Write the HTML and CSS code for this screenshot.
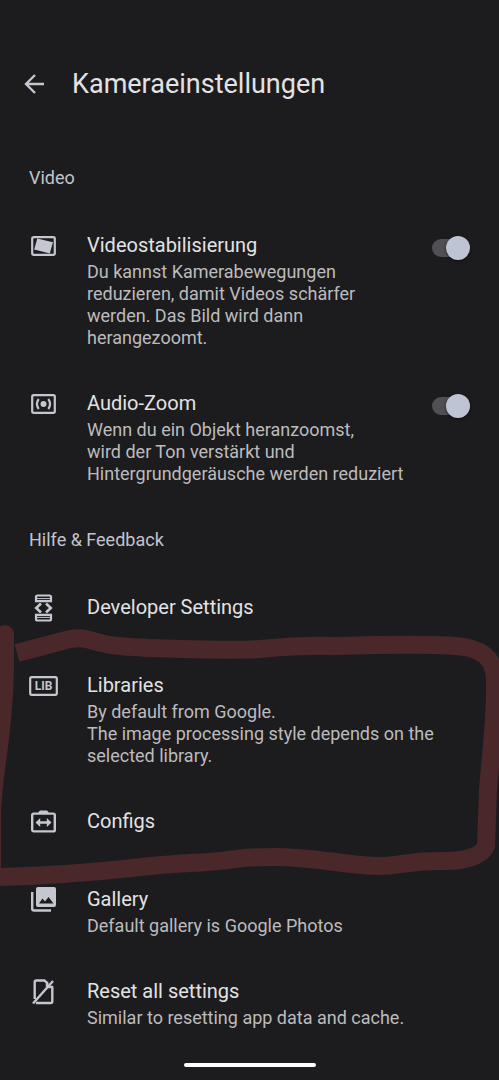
FILE: index.html
```html
<!DOCTYPE html>
<html lang="de">
<head>
<meta charset="utf-8">
<meta name="viewport" content="width=device-width, initial-scale=1">
<title>Kameraeinstellungen</title>
<link rel="stylesheet" href="styles.css">
</head>
<body>
<div class="screen">
  <header class="topbar">
    <button class="back" type="button" aria-label="Zurück">
      <svg width="20" height="20" viewBox="0 0 20 20" fill="none" stroke="currentColor" stroke-width="2.4"><path d="M20 10H2M11 1L2 10l9 9"/></svg>
    </button>
    <h1 class="title">Kameraeinstellungen</h1>
  </header>
  <main class="content">
    <section>
      <h2 class="section-label">Video</h2>
      <div class="row">
        <svg class="icon" viewBox="0 1 30 28"><rect x="3.2" y="6.2" width="22.6" height="17.6" rx="1.5" fill="none" stroke="currentColor" stroke-width="2.2"/><path d="M8.3 7.5L24 11.3 20.8 22.6 5.2 18.6z" fill="currentColor"/></svg>
        <div class="text">
          <label class="name" for="stab">Videostabilisierung</label>
          <p class="desc">Du kannst Kamerabewegungen<br>reduzieren, damit Videos schärfer<br>werden. Das Bild wird dann<br>herangezoomt.</p>
        </div>
        <input class="switch" type="checkbox" role="switch" id="stab" checked>
      </div>
      <div class="row">
        <svg class="icon" viewBox="0 1 30 28" fill="none" stroke="currentColor" stroke-width="2.2"><rect x="3.2" y="6.2" width="22.6" height="17.6" rx="1.5"/><circle cx="14.5" cy="15" r="3" fill="currentColor" stroke="none"/><path d="M9.7 10q-3.500 5 0 10M19.300 10q3.500 5 0 10"/></svg>
        <div class="text">
          <label class="name" for="zoom">Audio-Zoom</label>
          <p class="desc">Wenn du ein Objekt heranzoomst,<br>wird der Ton verstärkt und<br>Hintergrundgeräusche werden reduziert</p>
        </div>
        <input class="switch" type="checkbox" role="switch" id="zoom" checked>
      </div>
    </section>
    <section class="help">
      <h2 class="section-label">Hilfe &amp; Feedback</h2>
      <div class="row">
        <svg class="icon" viewBox="0 1 30 28" fill="none" stroke="currentColor" stroke-width="2.2"><path d="M7 8.200V4q0-1.500 1.500-1.500h12Q22 2.500 22 4v4.200zM7 21.800V26q0 1.500 1.500 1.500h12q1.500 0 1.500-1.500v-4.200z"/><path stroke-width="1" d="M8 5.600h13M8 24.400h13"/><path stroke-width="2.600" d="M12 10.500L7.200 15l4.800 4.500M17 10.500L21.800 15 17 19.500"/></svg>
        <div class="text"><h3 class="name">Developer Settings</h3></div>
      </div>
      <div class="row">
        <svg class="icon" viewBox="0 1 30 28"><rect x="1.200" y="6.200" width="26.600" height="17.600" rx="1.500" fill="none" stroke="currentColor" stroke-width="2.200"/><text class="lib" x="14.500" y="19" text-anchor="middle">LIB</text></svg>
        <div class="text">
          <h3 class="name">Libraries</h3>
          <p class="desc">By default from Google.<br>The image processing style depends on the<br>selected library.</p>
        </div>
      </div>
      <div class="row">
        <svg class="icon" viewBox="0 1 30 28"><path d="M9.500 6V5l1.500-1.500h7L19.500 5v1z" fill="currentColor"/><rect x="3.200" y="6.600" width="22.600" height="17.800" rx="1.500" fill="none" stroke="currentColor" stroke-width="2.400"/><path d="M6.500 15.500L11.200 11v3.300h6.600V11l4.700 4.500-4.700 4.500v-3.300h-6.600V20z" fill="currentColor"/></svg>
        <div class="text"><h3 class="name">Configs</h3></div>
      </div>
      <div class="row">
        <svg class="icon" viewBox="0 1 30 28"><path d="M3.200 7v16.500q0 2 2 2H22" fill="none" stroke="currentColor" stroke-width="2.400"/><path fill-rule="evenodd" fill="currentColor" d="M9 2h16q2 0 2 2v16q0 2-2 2H9q-2 0-2-2V4q0-2 2-2zM10 18.500h14.500l-5-6.500-3.500 4.500-2.500-3z"/></svg>
        <div class="text">
          <h3 class="name">Gallery</h3>
          <p class="desc">Default gallery is Google Photos</p>
        </div>
      </div>
      <div class="row">
        <svg class="icon" viewBox="0 1 30 28" fill="none" stroke="currentColor" stroke-width="2.400"><path d="M5.700 22V5q0-1.500 1.500-1.500H15.500L19 7M23.300 9.500V24.500q0 1.500-1.500 1.500H7M18 4.500V10h6M4 26.500L24 4"/></svg>
        <div class="text">
          <h3 class="name">Reset all settings</h3>
          <p class="desc">Similar to resetting app data and cache.</p>
        </div>
      </div>
      <svg class="marker" viewBox="0 0 499 290" preserveAspectRatio="none" aria-hidden="true">
        <path d="M17 43L70 29Q80 27 90 30C110 36 115 36 150 38C190 39 230 41 260 39C290 36 310 35 335 36C370 35 430 34 455 36Q495 38 495 70C496 110 490 150 488 180L486 236C482 246 465 251 445 251C410 250 400 256 380 256C350 256 310 246 270 247C230 247 240 251 190 253C130 256 110 264 0 267"/>
        <path stroke-linecap="round" d="M5 24V60C3 140-8 160-8 210V267H0"/>
      </svg>
    </section>
  </main>
  <footer class="navbar"><span class="handle"></span></footer>
</div>
</body>
</html>
```
FILE: styles.css
```css
* {
  box-sizing: border-box;
}

body {
  margin: 0;
  background: #1c1c1e;
  color: #e3e2e4;
  font-family: Roboto, "Liberation Sans", sans-serif;
}

h1, h2, h3, p {
  margin: 0;
  font-weight: 400;
}

.screen {
  display: flex;
  flex-direction: column;
  min-height: 100vh;
  overflow-x: hidden;
}

.topbar {
  display: flex;
  align-items: center;
  gap: 28px;
  height: 144px;
  padding: 24px 24px 0;
}

.back {
  display: flex;
  padding: 0;
  border: 0;
  background: none;
  color: #c4c6d0;
}

.title {
  font-size: 27px;
  line-height: 36px;
}

.content {
  flex: 1;
}

.section-label {
  padding: 0 29px;
  color: #c0c4cf;
  font-size: 18px;
  line-height: 68px;
}

.row {
  display: flex;
  gap: 28px;
  min-height: 78px;
  padding: 20px 29px 21px;
}

.icon {
  flex: none;
  width: 30px;
  height: 28px;
  color: #c4c6d0;
}

.lib {
  fill: currentColor;
  font-size: 12px;
  font-weight: 700;
}

.text {
  position: relative;
  z-index: 1;
  flex: 1;
}

.name {
  display: block;
  font-size: 20px;
  line-height: 26px;
}

.desc {
  margin-top: 3px;
  color: #bcbbbd;
  font-size: 18px;
  line-height: 22px;
  white-space: nowrap;
}

.switch {
  appearance: none;
  display: flex;
  flex: none;
  align-items: center;
  justify-content: flex-end;
  width: 38px;
  height: 18px;
  margin: 7px 0 0;
  border-radius: 9px;
  background: #505054;
}

.switch::before {
  content: "";
  width: 24px;
  height: 24px;
  border-radius: 50%;
  background: #bfc4d4;
  box-shadow: 0 1px 3px #0008;
}

.switch:not(:checked) {
  justify-content: flex-start;
}

.help {
  position: relative;
}

.marker {
  position: absolute;
  top: 104px;
  left: 0;
  width: 100%;
  height: 290px;
  fill: none;
  stroke: #4a2729;
  stroke-width: 18px;
  pointer-events: none;
}

.navbar {
  display: flex;
  justify-content: center;
  height: 30px;
  padding-top: 13px;
}

.handle {
  width: 132px;
  height: 4px;
  border-radius: 2px;
  background: #fff;
}
```
